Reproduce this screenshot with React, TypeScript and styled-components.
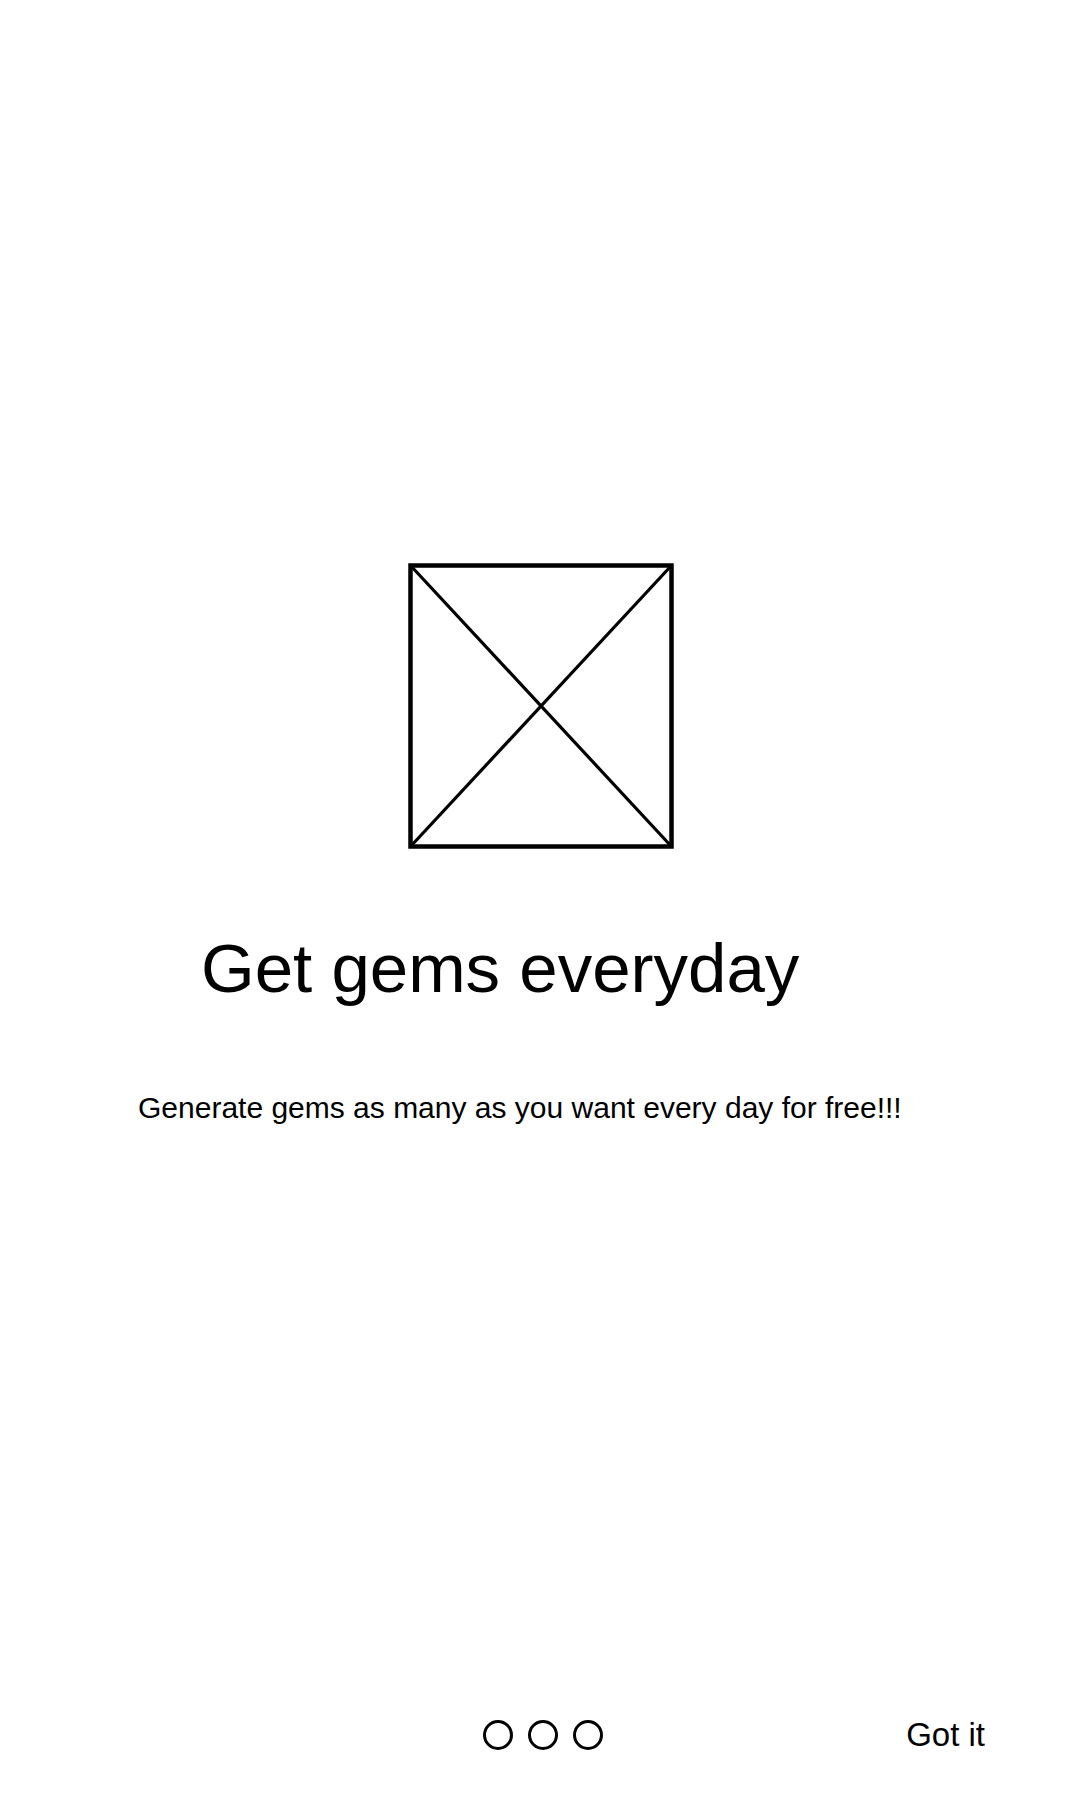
import React from "react";
import styled, { createGlobalStyle } from "styled-components";

const GlobalStyle = createGlobalStyle`
  html, body {
    margin: 0;
    padding: 0;
    background: #ffffff;
  }
  body {
    font-family: "Liberation Sans", Arial, sans-serif;
    color: #000000;
  }
`;

const Screen = styled.div`
  display: flex;
  flex-direction: column;
  width: 1080px;
  min-height: 1800px;
  background: #ffffff;
`;

const Slide = styled.main`
  display: flex;
  flex-direction: column;
  padding-top: 563px;
`;

const ImageHolder = styled.div`
  display: flex;
  justify-content: center;
  padding-left: 2px;
`;

const Title = styled.h1`
  margin: 80px 0 0;
  padding-left: 201px;
  font-size: 69px;
  line-height: 80px;
  font-weight: 400;
  white-space: nowrap;
`;

const Subtitle = styled.p`
  margin: 81px 0 0;
  padding-left: 138px;
  font-size: 30px;
  line-height: 36px;
  white-space: nowrap;
`;

const Footer = styled.footer`
  margin-top: auto;
  display: grid;
  grid-template-columns: 1fr auto 1fr;
  align-items: center;
  height: 36px;
  padding-bottom: 47px;
`;

const Dots = styled.div`
  grid-column: 2;
  display: flex;
  gap: 15px;
  margin-left: 6px;
`;

const Dot = styled.span<{ $active?: boolean }>`
  width: 30px;
  height: 30px;
  box-sizing: border-box;
  border: 3px solid #000;
  border-radius: 50%;
  background: ${(p) => (p.$active ? "#000" : "transparent")};
`;

const GotIt = styled.button`
  grid-column: 3;
  justify-self: end;
  margin-right: 95px;
  padding: 0;
  border: none;
  background: none;
  font-family: "Liberation Sans", Arial, sans-serif;
  font-size: 33px;
  line-height: 36px;
  color: #000;
  cursor: pointer;
`;

const Placeholder = () => (
  <svg width="266" height="286" viewBox="0 0 266 286">
    <rect x="2.5" y="2.5" width="261" height="281" fill="none" stroke="#000" strokeWidth="4.5" />
    <line x1="3" y1="3" x2="263" y2="283" stroke="#000" strokeWidth="3.2" />
    <line x1="263" y1="3" x2="3" y2="283" stroke="#000" strokeWidth="3.2" />
  </svg>
);

const App = () => {
  return (
    <Screen>
      <GlobalStyle />
      <Slide>
        <ImageHolder>
          <Placeholder />
        </ImageHolder>
        <Title>Get gems everyday</Title>
        <Subtitle>Generate gems as many as you want every day for free!!!</Subtitle>
      </Slide>
      <Footer>
        <Dots>
          <Dot />
          <Dot />
          <Dot />
        </Dots>
        <GotIt>Got it</GotIt>
      </Footer>
    </Screen>
  );
};

export default App;
